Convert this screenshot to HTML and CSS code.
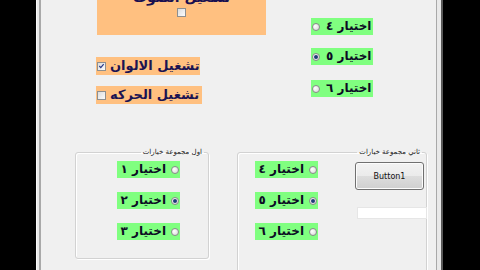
FILE: index.html
```html
<!DOCTYPE html>
<html lang="ar">
<head>
<meta charset="utf-8">
<link rel="stylesheet" href="styles.css">
</head>
<body>
<div class="screen">
  <div class="side"></div>
  <div class="frame">
    <div class="client">
      <div class="top">
        <div class="col-left">
          <div class="sound">
            <span class="sound-text">تشغيل الصوت</span>
            <span class="cb"></span>
          </div>
          <div class="chk chk1">
            <span class="cb checked"><svg viewBox="0 0 8 8" width="8" height="8"><path d="M1.5 4 L3.2 5.8 L6.5 1.8" fill="none" stroke="#2a3a8a" stroke-width="1.4"/></svg></span>
            <span class="chk-text">تشغيل الالوان</span>
          </div>
          <div class="chk chk2">
            <span class="cb"></span>
            <span class="chk-text">تشغيل الحركه</span>
          </div>
        </div>
        <div class="col-right">
          <div class="opt"><span class="rb"></span><span class="opt-text">اختيار ٤</span></div>
          <div class="opt"><span class="rb on"></span><span class="opt-text">اختيار ٥</span></div>
          <div class="opt"><span class="rb"></span><span class="opt-text">اختيار ٦</span></div>
        </div>
      </div>
      <div class="bottom">
        <fieldset class="group group1">
          <legend>اول مجموعة خيارات</legend>
          <div class="opts">
            <div class="opt rtl"><span class="rb"></span><span class="opt-text">اختيار ١</span></div>
            <div class="opt rtl"><span class="rb on"></span><span class="opt-text">اختيار ٢</span></div>
            <div class="opt rtl"><span class="rb"></span><span class="opt-text">اختيار ٣</span></div>
          </div>
        </fieldset>
        <fieldset class="group group2">
          <legend>ثاني مجموعة خيارات</legend>
          <div class="g2-row">
            <div class="opts">
              <div class="opt rtl"><span class="rb"></span><span class="opt-text">اختيار ٤</span></div>
              <div class="opt rtl"><span class="rb on"></span><span class="opt-text">اختيار ٥</span></div>
              <div class="opt rtl"><span class="rb"></span><span class="opt-text">اختيار ٦</span></div>
            </div>
            <div class="ctrls">
              <div class="btn">Button1</div>
              <div class="tb"></div>
            </div>
          </div>
        </fieldset>
      </div>
    </div>
  </div>
</div>
</body>
</html>
```

FILE: styles.css
```css
* { box-sizing: border-box; }
html, body { margin: 0; padding: 0; background: #000; }
body { width: 480px; height: 270px; overflow: hidden; font-family: "DejaVu Sans", sans-serif; }

.screen { display: flex; width: 480px; height: 270px; }
.side { width: 36px; flex: none; }
.frame {
  width: 407px; flex: none; height: 270px;
  background: #e9e9e9;
  border-left: 1px solid #fafafa;
  border-right: 2px solid #5a5a5a;
  padding: 0 4px 0 2px;
  display: flex;
}
.client {
  flex: 1;
  background: #f0f0f0;
  border-left: 2px solid #a9a9a9;
  border-right: 1px solid #a9a9a9;
  overflow: hidden;
}

.top { display: flex; height: 148px; }
.col-left { margin-left: 55px; width: 170px; display: flex; flex-direction: column; align-items: flex-start; }
.sound {
  margin-left: 1px; width: 169px; height: 35px;
  background: #ffc080;
  display: flex; flex-direction: column; align-items: center;
}
.sound-text {
  font-weight: bold; font-size: 14px; line-height: 16px; color: #1a1050;
  margin-top: -11px;
}
.sound .cb { margin-top: 3px; }

.cb {
  width: 9px; height: 9px; flex: none;
  border: 1px solid #8e8f8f;
  background: linear-gradient(135deg, #dcdcdc, #fbfbfb);
  display: flex; align-items: center; justify-content: center;
}
.cb.checked svg { display: block; }

.chk {
  height: 18px; background: #ffc080;
  display: flex; align-items: center; gap: 4px;
  padding-left: 1px;
}
.chk1 { margin-top: 22px; width: 104px; }
.chk2 { margin-top: 11px; width: 106px; }
.chk-text { font-weight: bold; font-size: 13px; line-height: 18px; color: #1c1452; white-space: nowrap; }

.col-right { margin-left: 45px; padding-top: 18px; display: flex; flex-direction: column; gap: 13px; }
.col-right .opt:nth-child(3) { margin-top: 2px; }

.opt {
  width: 62px; height: 17px; background: #80ff80;
  display: flex; align-items: center; gap: 6px;
  padding: 0 2px 0 1px;
}
.opt.rtl { flex-direction: row-reverse; width: 63px; padding: 0 1px 0 2px; gap: 5px; }
.opt-text { font-weight: bold; font-size: 12px; line-height: 17px; color: #0c0c24; white-space: nowrap; }

.rb {
  width: 8px; height: 8px; flex: none; border-radius: 50%;
  border: 1px solid #8a8a8a;
  background: radial-gradient(circle at 35% 35%, #ffffff, #d6d6d6);
  display: flex; align-items: center; justify-content: center;
}
.rb.on::after {
  content: ""; width: 4px; height: 4px; border-radius: 50%;
  background: #1f3a7a;
}

.bottom { display: flex; align-items: flex-start; }
.group {
  margin: 0; padding: 0; min-width: 0;
  border: 1px solid #d2d2d2;
  border-radius: 3px;
  box-shadow: inset 1px 1px 0 #fff, 1px 1px 0 #fff;
}
.group legend {
  margin-left: auto; margin-right: 4px;
  padding: 0 2px;
  font-size: 7px; line-height: 8px; color: #202020;
}
.group1 { margin-left: 34px; width: 134px; height: 111px; }
.group2 { margin-left: 28px; width: 190px; height: 140px; }

.opts { display: flex; flex-direction: column; gap: 14px; }
.group1 .opts { margin: 5px 0 0 41px; }
.g2-row { display: flex; align-items: flex-start; }
.group2 .opts { margin: 5px 0 0 17px; }
.ctrls { margin-left: 37px; margin-top: 6px; display: flex; flex-direction: column; align-items: flex-start; }
.btn {
  width: 69px; height: 28px;
  border: 1px solid #707070; border-radius: 3px;
  background: linear-gradient(#f2f2f2 0%, #ebebeb 50%, #dddddd 51%, #cfcfcf 100%);
  box-shadow: inset 0 0 0 1px #fcfcfc;
  display: flex; align-items: center; justify-content: center;
  font-family: "DejaVu Sans", sans-serif; font-size: 8px; color: #111;
}
.tb { margin-left: 2px; margin-top: 17px; width: 70px; height: 12px; background: #fff; border: 1px solid #e6e6e6; }
```
